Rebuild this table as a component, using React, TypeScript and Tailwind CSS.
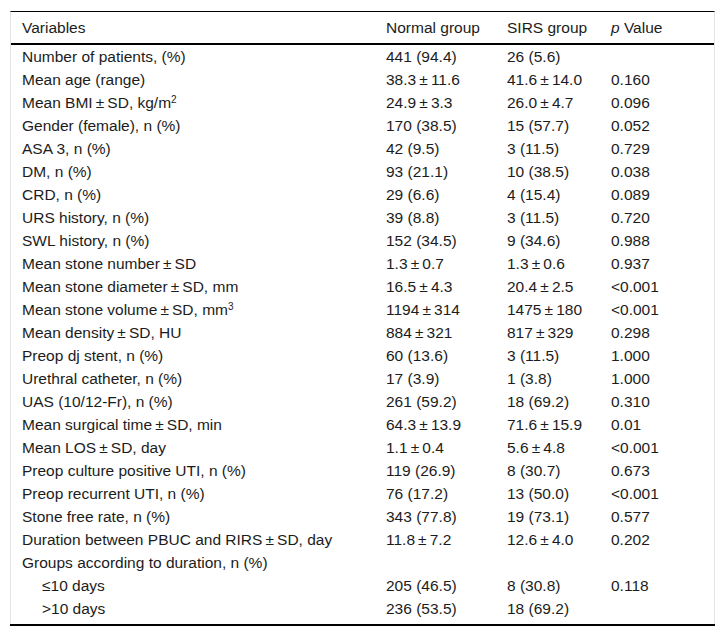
const rows: { label: React.ReactNode; normal: string; sirs: string; p: string; indent?: boolean }[] = [
  { label: 'Number of patients, (%)', normal: '441 (94.4)', sirs: '26 (5.6)', p: '' },
  { label: 'Mean age (range)', normal: '38.3\u2009±\u200911.6', sirs: '41.6\u2009±\u200914.0', p: '0.160' },
  {
    label: (
      <>
        Mean BMI{'\u2009±\u2009'}SD, kg/m<sup className="text-[10px]">2</sup>
      </>
    ),
    normal: '24.9\u2009±\u20093.3',
    sirs: '26.0\u2009±\u20094.7',
    p: '0.096',
  },
  { label: 'Gender (female), n (%)', normal: '170 (38.5)', sirs: '15 (57.7)', p: '0.052' },
  { label: 'ASA 3, n (%)', normal: '42 (9.5)', sirs: '3 (11.5)', p: '0.729' },
  { label: 'DM, n (%)', normal: '93 (21.1)', sirs: '10 (38.5)', p: '0.038' },
  { label: 'CRD, n (%)', normal: '29 (6.6)', sirs: '4 (15.4)', p: '0.089' },
  { label: 'URS history, n (%)', normal: '39 (8.8)', sirs: '3 (11.5)', p: '0.720' },
  { label: 'SWL history, n (%)', normal: '152 (34.5)', sirs: '9 (34.6)', p: '0.988' },
  { label: 'Mean stone number\u2009±\u2009SD', normal: '1.3\u2009±\u20090.7', sirs: '1.3\u2009±\u20090.6', p: '0.937' },
  { label: 'Mean stone diameter\u2009±\u2009SD, mm', normal: '16.5\u2009±\u20094.3', sirs: '20.4\u2009±\u20092.5', p: '<0.001' },
  {
    label: (
      <>
        Mean stone volume{'\u2009±\u2009'}SD, mm<sup className="text-[10px]">3</sup>
      </>
    ),
    normal: '1194\u2009±\u2009314',
    sirs: '1475\u2009±\u2009180',
    p: '<0.001',
  },
  { label: 'Mean density\u2009±\u2009SD, HU', normal: '884\u2009±\u2009321', sirs: '817\u2009±\u2009329', p: '0.298' },
  { label: 'Preop dj stent, n (%)', normal: '60 (13.6)', sirs: '3 (11.5)', p: '1.000' },
  { label: 'Urethral catheter, n (%)', normal: '17 (3.9)', sirs: '1 (3.8)', p: '1.000' },
  { label: 'UAS (10/12-Fr), n (%)', normal: '261 (59.2)', sirs: '18 (69.2)', p: '0.310' },
  { label: 'Mean surgical time\u2009±\u2009SD, min', normal: '64.3\u2009±\u200913.9', sirs: '71.6\u2009±\u200915.9', p: '0.01' },
  { label: 'Mean LOS\u2009±\u2009SD, day', normal: '1.1\u2009±\u20090.4', sirs: '5.6\u2009±\u20094.8', p: '<0.001' },
  { label: 'Preop culture positive UTI, n (%)', normal: '119 (26.9)', sirs: '8 (30.7)', p: '0.673' },
  { label: 'Preop recurrent UTI, n (%)', normal: '76 (17.2)', sirs: '13 (50.0)', p: '<0.001' },
  { label: 'Stone free rate, n (%)', normal: '343 (77.8)', sirs: '19 (73.1)', p: '0.577' },
  { label: 'Duration between PBUC and RIRS\u2009±\u2009SD, day', normal: '11.8\u2009±\u20097.2', sirs: '12.6\u2009±\u20094.0', p: '0.202' },
  { label: 'Groups according to duration, n (%)', normal: '', sirs: '', p: '' },
  { label: '≤10 days', normal: '205 (46.5)', sirs: '8 (30.8)', p: '0.118', indent: true },
  { label: '>10 days', normal: '236 (53.5)', sirs: '18 (69.2)', p: '', indent: true },
]

export default function App() {
  return (
    <div className="min-h-screen bg-white pt-[11px] font-['Liberation_Sans',Arial,sans-serif] text-[15.5px] text-[#1c1c1c]">
      <div className="mx-[10px] w-[705px]">
        <div className="border-x border-t border-x-[#e4e4e4] border-t-black pb-[4px]">
          <table className="w-full table-fixed border-collapse">
            <colgroup>
              <col className="w-[365px]" />
              <col className="w-[121px]" />
              <col className="w-[104px]" />
              <col />
            </colgroup>
            <thead>
              <tr className="h-[32px] border-b-2 border-black text-left">
                <th className="pl-[11px] font-normal">Variables</th>
                <th className="pl-[10px] font-normal">Normal group</th>
                <th className="pl-[10px] font-normal">SIRS group</th>
                <th className="pl-[10px] font-normal">
                  <i>p</i> Value
                </th>
              </tr>
            </thead>
            <tbody>
              {rows.map((row, i) => (
                <tr key={i} className="h-[23px] leading-[23px]">
                  <td className={row.indent ? 'pl-[31px]' : 'pl-[11px]'}>{row.label}</td>
                  <td className="pl-[10px]">{row.normal}</td>
                  <td className="pl-[10px]">{row.sirs}</td>
                  <td className="pl-[10px]">{row.p}</td>
                </tr>
              ))}
            </tbody>
          </table>
        </div>
        <div className="border-b-2 border-black" />
      </div>
    </div>
  )
}
